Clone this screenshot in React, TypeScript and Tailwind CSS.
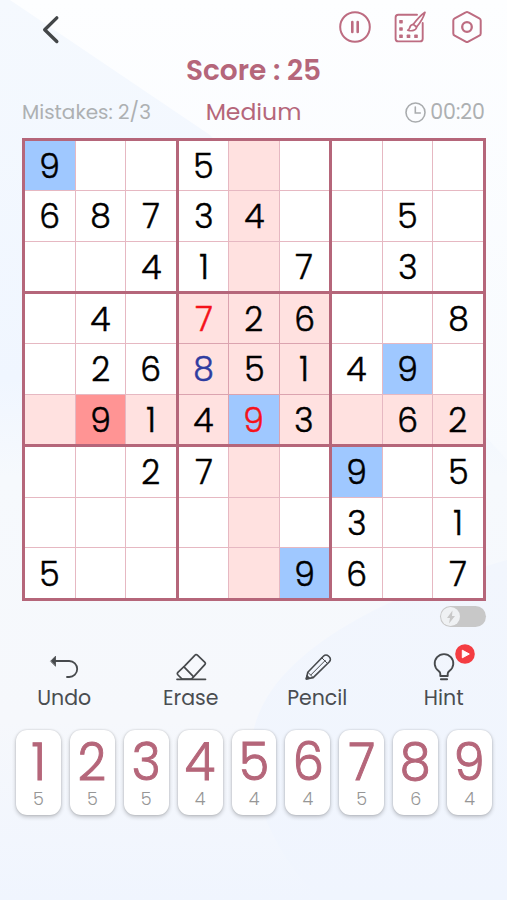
import React from "react";

type Tone = "given" | "wrong" | "entered";

const GRID: string[] = [
  "9..5.....",
  "68734..5.",
  "..41.7.3.",
  ".4.726..8",
  ".2685149.",
  ".91493.62",
  "..27..9.5",
  "......3.1",
  "5....96.7",
];

const SELECTED = { row: 5, col: 4 };
const WRONG = new Set(["3-3", "5-4"]);
const ENTERED = new Set(["4-3"]);
const CONFLICT = new Set(["5-1"]);

const PAD = [5, 5, 5, 4, 4, 4, 5, 6, 4];

const toneClass: Record<Tone, string> = {
  given: "text-black",
  wrong: "text-[#f5121a]",
  entered: "text-[#2f3ca0]",
};

function cellBackground(row: number, col: number, value: string): string {
  if (CONFLICT.has(`${row}-${col}`)) return "bg-[#ff9494]";
  if (value === "9") return "bg-[#9fc8ff]";
  const sameBox =
    Math.floor(row / 3) === Math.floor(SELECTED.row / 3) &&
    Math.floor(col / 3) === Math.floor(SELECTED.col / 3);
  if (row === SELECTED.row || col === SELECTED.col || sameBox) return "bg-[#ffe1e0]";
  return "bg-white";
}

function Cell({ row, col }: { row: number; col: number }) {
  const value = GRID[row][col];
  const key = `${row}-${col}`;
  const tone: Tone = WRONG.has(key) ? "wrong" : ENTERED.has(key) ? "entered" : "given";
  return (
    <div className={`flex items-center justify-center pt-[1px] ${cellBackground(row, col, value)}`}>
      {value !== "." && (
        <span className={`inline-block scale-x-[0.97] text-[34px] leading-none font-light [-webkit-text-stroke:0.5px_currentColor] ${toneClass[tone]}`}>{value}</span>
      )}
    </div>
  );
}

function Box({ index }: { index: number }) {
  const top = Math.floor(index / 3) * 3;
  const left = (index % 3) * 3;
  return (
    <div
      className={`grid grid-cols-3 grid-rows-3 gap-px ${index === 4 ? "bg-[#dba3af]" : "bg-[#e6b8c2]"}`}
    >
      {Array.from({ length: 9 }, (_, i) => (
        <Cell key={i} row={top + Math.floor(i / 3)} col={left + (i % 3)} />
      ))}
    </div>
  );
}

function Board() {
  return (
    <div className="ml-[22px] grid h-[463px] w-[464px] grid-cols-[151px_150px_151px] grid-rows-[150px_150px_151px] gap-[3px] border-[3px] border-[#b5667a] bg-[#b5667a]">
      {Array.from({ length: 9 }, (_, i) => (
        <Box key={i} index={i} />
      ))}
    </div>
  );
}

function PauseIcon() {
  return (
    <svg width="34" height="34" viewBox="0 0 34 34" fill="none" stroke="#bd6c81" strokeLinecap="round">
      <circle cx="17" cy="17" r="14.8" strokeWidth="2" />
      <path d="M14.3 12v10M19.700 12v10" strokeWidth="2.600" />
    </svg>
  );
}

function ThemeIcon() {
  return (
    <svg width="34" height="34" viewBox="0 0 34 34" fill="none" stroke="#bd6c81" strokeLinecap="round" strokeLinejoin="round">
      <path d="M24 4.700H5.300A2.700 2.700 0 0 0 2.600 7.400v21.300A2.700 2.700 0 0 0 5.300 31.400H27A2.700 2.700 0 0 0 29.700 28.700V13" strokeWidth="1.900" />
      <path d="M32 2.300C28 5 24 9.500 20.300 14.300l3.300 2.700C27.500 12.500 30.500 7.500 32 2.300Z" strokeWidth="1.700" />
      <path d="M20.300 14.300c-2.600.2-3.300 1.900-3.700 3.700-.2 1-.9 1.700-1.900 2.200 3.900 1.200 8.600.4 8.900-3.200" strokeWidth="1.700" />
      <g fill="#bd6c81" stroke="none">
        <rect x="6.200" y="9.900" width="3.600" height="3.600" rx=".7" />
        <rect x="6.200" y="17.200" width="3.600" height="3.600" rx=".7" />
        <rect x="6.200" y="24.500" width="3.600" height="3.600" rx=".7" />
        <rect x="13.700" y="24.500" width="3.600" height="3.600" rx=".7" />
        <rect x="21.200" y="24.500" width="3.600" height="3.600" rx=".7" />
      </g>
    </svg>
  );
}

function SettingsIcon() {
  return (
    <svg width="34" height="34" viewBox="0 0 34 34" fill="none" stroke="#bd6c81" strokeWidth="2" strokeLinejoin="round">
      <path d="M15.700 2.300a2.600 2.600 0 0 1 2.600 0l11 6a2.600 2.600 0 0 1 1.400 2.300v12.800a2.600 2.600 0 0 1-1.400 2.300l-11 6a2.600 2.600 0 0 1-2.600 0l-11-6a2.600 2.600 0 0 1-1.400-2.300V10.600a2.600 2.600 0 0 1 1.400-2.300Z" />
      <circle cx="17" cy="17" r="4.800" strokeWidth="2.300" />
    </svg>
  );
}

function UndoIcon() {
  return (
    <svg width="32" height="30" viewBox="0 0 32 30" fill="none" stroke="#474a4d" strokeWidth="1.800" strokeLinecap="round">
      <path d="M6 9h15.200a8 8 0 0 1 0 16H19" />
      <path d="M2.800 9 7.500 4.200v9.600Z" fill="#474a4d" strokeWidth=".8" strokeLinejoin="round" />
    </svg>
  );
}

function EraseIcon() {
  return (
    <svg width="32" height="30" viewBox="0 0 32 30" fill="none" stroke="#474a4d" strokeWidth="1.700" strokeLinecap="round" strokeLinejoin="round">
      <path d="m10 13.700 9.800-10.400a1.800 1.800 0 0 1 2.600-.1l7.300 6.900a1.800 1.800 0 0 1 .1 2.500L17.200 26.300a2 2 0 0 1-1.500.8H8.400a3 3 0 0 1-2-.8L3 23a2 2 0 0 1-.1-2.700Z" />
      <path d="M9 14.800l9.200 9.500M2 27.300h28.500" />
    </svg>
  );
}

function PencilIcon() {
  return (
    <svg width="32" height="30" viewBox="0 0 32 30" fill="none" stroke="#474a4d" strokeWidth="1.600" strokeLinecap="round" strokeLinejoin="round">
      <path d="M5.300 26.900 6.800 20.200 22.600 4a3.400 3.400 0 0 1 4.800 0l1 1a3.400 3.400 0 0 1 0 4.800L12.200 25.600Z" />
      <path d="M6.800 20.200 12.200 25.600M10 22.800 24.300 8.400M20.800 5.800l5.800 5.800" strokeWidth="1" />
      <path d="m5.300 26.900.7-3 2.300 2.300Z" fill="#474a4d" />
    </svg>
  );
}

function HintIcon() {
  return (
    <svg width="32" height="30" viewBox="0 0 32 30" fill="none" stroke="#474a4d" strokeWidth="1.900" strokeLinecap="round" strokeLinejoin="round">
      <path d="M12.300 24v-2.200c0-1.200-.8-2.100-1.900-3a9.300 9.300 0 1 1 11.200 0c-1.100.9-1.900 1.800-1.900 3V24Z" />
      <path d="M12.900 27.200h6.200" />
    </svg>
  );
}

function Tool({ label, badge, children }: { label: string; badge?: boolean; children: React.ReactNode }) {
  return (
    <button className="flex w-[126.500px] flex-col items-center">
      <span className="relative flex h-[30px]">
        {children}
        {badge && (
          <svg className="absolute -top-[8px] left-[27px]" width="20" height="20" viewBox="0 0 20 20">
            <circle cx="10" cy="10" r="9.800" fill="#f43d42" />
            <path d="M7.300 6.200v7.600l7-3.800Z" fill="#fff" stroke="#fff" strokeLinejoin="round" />
          </svg>
        )}
      </span>
      <span className="mt-[2px] text-[20.500px] leading-[28px] text-[#4a4d51]">{label}</span>
    </button>
  );
}

function Backdrop() {
  return (
    <svg className="absolute inset-0 -z-10" width="507" height="900" viewBox="0 0 507 900" preserveAspectRatio="none">
      <defs>
        <linearGradient id="wash" x1="0" y1="0" x2="0" y2="1">
          <stop offset="0" stopColor="#f5f9fe" />
          <stop offset=".42" stopColor="#f0f6ff" />
          <stop offset=".53" stopColor="#f6f9fd" />
          <stop offset=".8" stopColor="#f6f8fc" />
          <stop offset="1" stopColor="#f0f5fe" />
        </linearGradient>
        <linearGradient id="glow" x1="0" y1="0" x2="0" y2="1">
          <stop offset="0" stopColor="#fdfeff" />
          <stop offset="1" stopColor="#f7fafe" />
        </linearGradient>
        <linearGradient id="swell" x1="0" y1="0" x2="0" y2="1">
          <stop offset="0" stopColor="#f2f6fd" />
          <stop offset="1" stopColor="#f0f5fe" />
        </linearGradient>
      </defs>
      <rect width="507" height="900" fill="url(#wash)" />
      <path d="M10 0H507V460L210 135Z" fill="url(#glow)" />
      <path d="M507 560C400 590 262 650 252 740C247 810 290 870 320 900H507Z" fill="url(#swell)" />
    </svg>
  );
}

export default function App() {
  return (
    <div className="relative isolate flex h-[900px] w-[507px] flex-col overflow-hidden font-['Poppins','Inter',sans-serif]">
      <Backdrop />

      <header className="flex h-[54px] items-start pt-[10px] pr-[23px] pl-[40px]">
        <svg className="mt-[5px]" width="22" height="30" viewBox="0 0 22 30" fill="none" stroke="#434648" strokeWidth="3.400" strokeLinecap="round" strokeLinejoin="round">
          <path d="M16.800 2.900 4.700 14.700 16.800 26.500" />
        </svg>
        <div className="ml-auto flex">
          <PauseIcon />
          <span className="mr-[23px] ml-[21px]">
            <ThemeIcon />
          </span>
          <SettingsIcon />
        </div>
      </header>

      <div className="h-[38px] text-center text-[28px] leading-[33px] font-semibold text-[#b5667a]">Score : 25</div>

      <div className="grid h-[46px] grid-cols-[1fr_auto_1fr] items-start pr-[22px] pl-[22px] leading-[40px] whitespace-nowrap text-[#adb0b2]">
        <span className="text-[20px]">Mistakes: 2/3</span>
        <span className="text-[23.500px] text-[#b5667a]">Medium</span>
        <span className="flex items-center justify-end gap-[4px] text-[20.500px]">
          <svg width="21" height="21" viewBox="0 0 21 21" fill="none" stroke="#a9acae" strokeWidth="1.600" strokeLinecap="round">
            <circle cx="10.500" cy="10.500" r="9.500" />
            <path d="M10.300 5v6h5" />
          </svg>
          00:20
        </span>
      </div>

      <Board />

      <div className="mt-[5px] mr-[21px] flex h-[21px] w-[46px] items-center self-end rounded-full bg-[#c8c8c8] p-[1px]">
        <div className="flex size-[19px] items-center justify-center rounded-full bg-[#eff1f3]">
          <svg width="12" height="14" viewBox="0 0 12 14" fill="#c8c8c8">
            <path d="M7.500.5 2 8h3L4 13.500 10 6H7Z" />
          </svg>
        </div>
      </div>

      <nav className="mt-[25px] flex pl-[1px]">
        <Tool label="Undo"><UndoIcon /></Tool>
        <Tool label="Erase"><EraseIcon /></Tool>
        <Tool label="Pencil"><PencilIcon /></Tool>
        <Tool label="Hint" badge><HintIcon /></Tool>
      </nav>

      <div className="mt-[18px] grid grid-cols-9 gap-[9px] pr-[15px] pl-[16px]">
        {PAD.map((left, i) => (
          <button
            key={i}
            className="flex h-[85px] flex-col items-center rounded-[11px] bg-white shadow-[0_2px_4px_rgba(0,0,0,0.22),0_0_2px_rgba(0,0,0,0.18)]"
          >
            <span className="mt-[4px] inline-block scale-x-[0.95] text-[52px] leading-[55px] font-light [-webkit-text-stroke:1px_currentColor] text-[#b5667a]">{i + 1}</span>
            <span className="text-[17.500px] leading-[21px] font-light text-[#969696]">{left}</span>
          </button>
        ))}
      </div>
    </div>
  );
}
